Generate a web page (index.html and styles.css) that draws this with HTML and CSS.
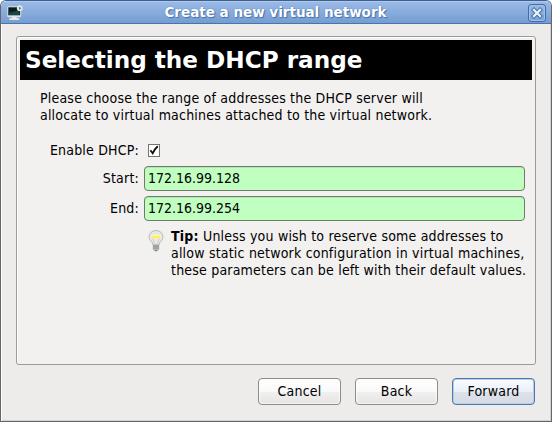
FILE: index.html
```html
<!DOCTYPE html>
<html lang="en">
<head>
<meta charset="utf-8">
<title>Create a new virtual network</title>
<link rel="stylesheet" href="styles.css">
</head>
<body>
<div class="window">
  <header class="titlebar">
    <svg class="app-icon" width="16" height="16" viewBox="0 0 16 16">
      <rect x="0.5" y="1.5" width="13.4" height="10.5" rx="1" fill="#e8e8e4" stroke="#d4d6d2" stroke-width=".6"/>
      <rect x="1.3" y="2.3" width="11.8" height="8" fill="#0b1c20"/>
      <path d="M1.5 7Q6 8 12.5 4V10H1.5Z" fill="#15464a"/>
      <path d="M5 12h4.5l.5 1.3h2.3v1.6H2.3v-1.6h2.2Z" fill="#e8e8e4"/>
      <circle cx="12.8" cy="3.2" r="2.9" fill="#dfe6e2"/>
      <path d="M12.1 1.7v3l2.2-1.5Z" fill="#47706f"/>
    </svg>
    <h1 class="title">Create a new virtual network</h1>
    <button class="close" aria-label="Close">
      <svg width="12" height="12" viewBox="0 0 12 12">
        <path d="M3 3l6 6M9 3L3 9" stroke="#426ca5" stroke-width="4.2" stroke-linecap="square"/>
        <path d="M3 3l6 6M9 3L3 9" stroke="#e8f0fa" stroke-width="2.3" stroke-linecap="square"/>
      </svg>
    </button>
  </header>
  <main class="content">
    <section class="page">
      <h2 class="heading">Selecting the DHCP range</h2>
      <p class="intro">Please choose the range of addresses the DHCP server will<br>allocate to virtual machines attached to the virtual network.</p>
      <div class="form">
        <span class="label">Enable DHCP:</span>
        <span class="check">
          <svg width="12" height="13" viewBox="0 0 12 13">
            <rect x=".5" y=".5" width="11" height="12" fill="#fff" stroke="#777370"/>
            <path d="M2.4 6.2L4.7 9.3Q6.7 5 9.8 2.3" fill="none" stroke="#111" stroke-width="1.8"/>
          </svg>
        </span>
        <span class="label">Start:</span>
        <div class="entry">172.16.99.128</div>
        <span class="label">End:</span>
        <div class="entry">172.16.99.254</div>
      </div>
      <div class="tip">
        <svg class="bulb" width="16" height="22" viewBox="0 0 16 22">
          <path d="M5 15C5 11.5 1 11 1 6.8a7 6.3 0 0 1 14 0C15 11 11 11.5 11 15Z" fill="#e6e8e5" stroke="#b0b3af" stroke-width=".9"/>
          <path d="M6.5 14L4.5 7.5l2 1.2L8 7.3l1.5 1.4 2-1.2-2 6.5" fill="none" stroke="#c9c8bb" stroke-width=".8"/>
          <ellipse cx="8" cy="6.6" rx="5" ry="2.4" fill="#fff7b4"/>
          <path d="M3.5 6.3L6.5 7.6 8 6.4l1.5 1.2 3-1.3" fill="none" stroke="#fce94f" stroke-width="1.3"/>
          <rect x="4.8" y="14.4" width="6.4" height="5.8" rx="1" fill="#b7b9b6"/>
          <path d="M5 16h6M5 18h6" stroke="#858886" stroke-width=".9"/>
          <path d="M6 20h4l-1 1.3H7Z" fill="#858886"/>
        </svg>
        <p class="tip-text"><b>Tip:</b> Unless you wish to reserve some addresses to<br>allow static network configuration in virtual machines,<br>these parameters can be left with their default values.</p>
      </div>
    </section>
    <footer class="actions">
      <button class="button">Cancel</button>
      <button class="button">Back</button>
      <button class="button primary">Forward</button>
    </footer>
  </main>
</div>
</body>
</html>
```

FILE: styles.css
```css
* {
  box-sizing: border-box;
}

body {
  margin: 0;
  background: #fff;
  color: #000;
  font: 14px/17px "DejaVu Sans Condensed", "DejaVu Sans", sans-serif;
  font-stretch: condensed;
  letter-spacing: 0.2px;
}

h1, h2, p {
  margin: 0;
}

.window {
  display: flex;
  flex-direction: column;
  width: 552px;
  height: 422px;
  border: 1px solid #686665;
  border-top-color: #415f8d;
  border-radius: 6px 6px 0 0;
  overflow: hidden;
}

.titlebar {
  display: flex;
  align-items: center;
  height: 23px;
  padding: 0 5px 0 6px;
  border-top: 1px solid #b0c9ef;
  border-bottom: 1px solid #4b74ad;
  background: linear-gradient(#9ab9e6, #749dd2);
}

.app-icon {
  flex: none;
  margin-top: 1px;
}

.title {
  flex: 1;
  color: #fff;
  font: bold 13.5px/17px "DejaVu Sans", sans-serif;
  letter-spacing: 0;
  text-align: center;
  white-space: nowrap;
  text-shadow: 1px 1px 1px #4570a9, 0 0 1px #4570a9;
}

.close {
  display: flex;
  align-items: center;
  justify-content: center;
  flex: none;
  width: 18px;
  height: 18px;
  padding: 0;
  border: 1px solid #416da7;
  border-radius: 3px;
  background: linear-gradient(#9ab9e6, #7ba3d7);
  box-shadow: inset 0 0 0 1px #a1bfe8;
}

.content {
  flex: 1;
  padding: 12px 15px 15px;
  background: #edeceb;
  box-shadow: inset 1px 0 #fff, inset -1px -1px #d3d1cf;
}

.page {
  height: 329px;
  padding: 3px;
  border: 1px solid #9c9a98;
  border-radius: 3px;
  background: #f2f1f0;
  box-shadow: inset 1px 1px #fff;
}

.heading {
  height: 40px;
  padding-left: 5px;
  background: #000;
  color: #fff;
  font: bold 23.15px/40px "DejaVu Sans", sans-serif;
  letter-spacing: 0;
  white-space: nowrap;
}

.intro {
  margin: 10px 0 0 20px;
  white-space: nowrap;
}

.form {
  display: grid;
  grid-template-columns: 119px 381px;
  grid-template-rows: 21px 25px 25px;
  column-gap: 5px;
  row-gap: 5px;
  margin-top: 16px;
  align-items: center;
}

.label {
  text-align: right;
}

.check {
  display: flex;
  padding-left: 4px;
}

.entry {
  height: 25px;
  padding: 0 3px;
  border: 1px solid #6d7b69;
  border-radius: 4px;
  background: #c0ffc0;
  line-height: 23px;
  letter-spacing: 0;
  box-shadow: inset 0 1px #b0e8b0;
}

.tip {
  display: flex;
  gap: 7px;
  margin: 7px 0 0 128px;
}

.bulb {
  flex: none;
  margin-top: 2px;
}

.tip-text {
  white-space: nowrap;
}

.actions {
  display: flex;
  justify-content: flex-end;
  gap: 14px;
  margin-top: 13px;
  padding-right: 1px;
}

.button {
  width: 83px;
  height: 27px;
  padding: 0;
  border: 1px solid #8e8c89;
  border-radius: 4px;
  background: linear-gradient(#fff, #f9f9f9 50%, #f0f0ef 51%, #e6e5e4);
  color: #000;
  font: inherit;
  letter-spacing: inherit;
  box-shadow: inset 0 0 0 1px #fff9;
}

.primary {
  border-color: #4e78b0;
  background: linear-gradient(#fafbfe, #eaf0f8 50%, #dde2ea 51%, #d7dce3);
  box-shadow: inset 0 0 0 1px #b8cde9;
}
```
